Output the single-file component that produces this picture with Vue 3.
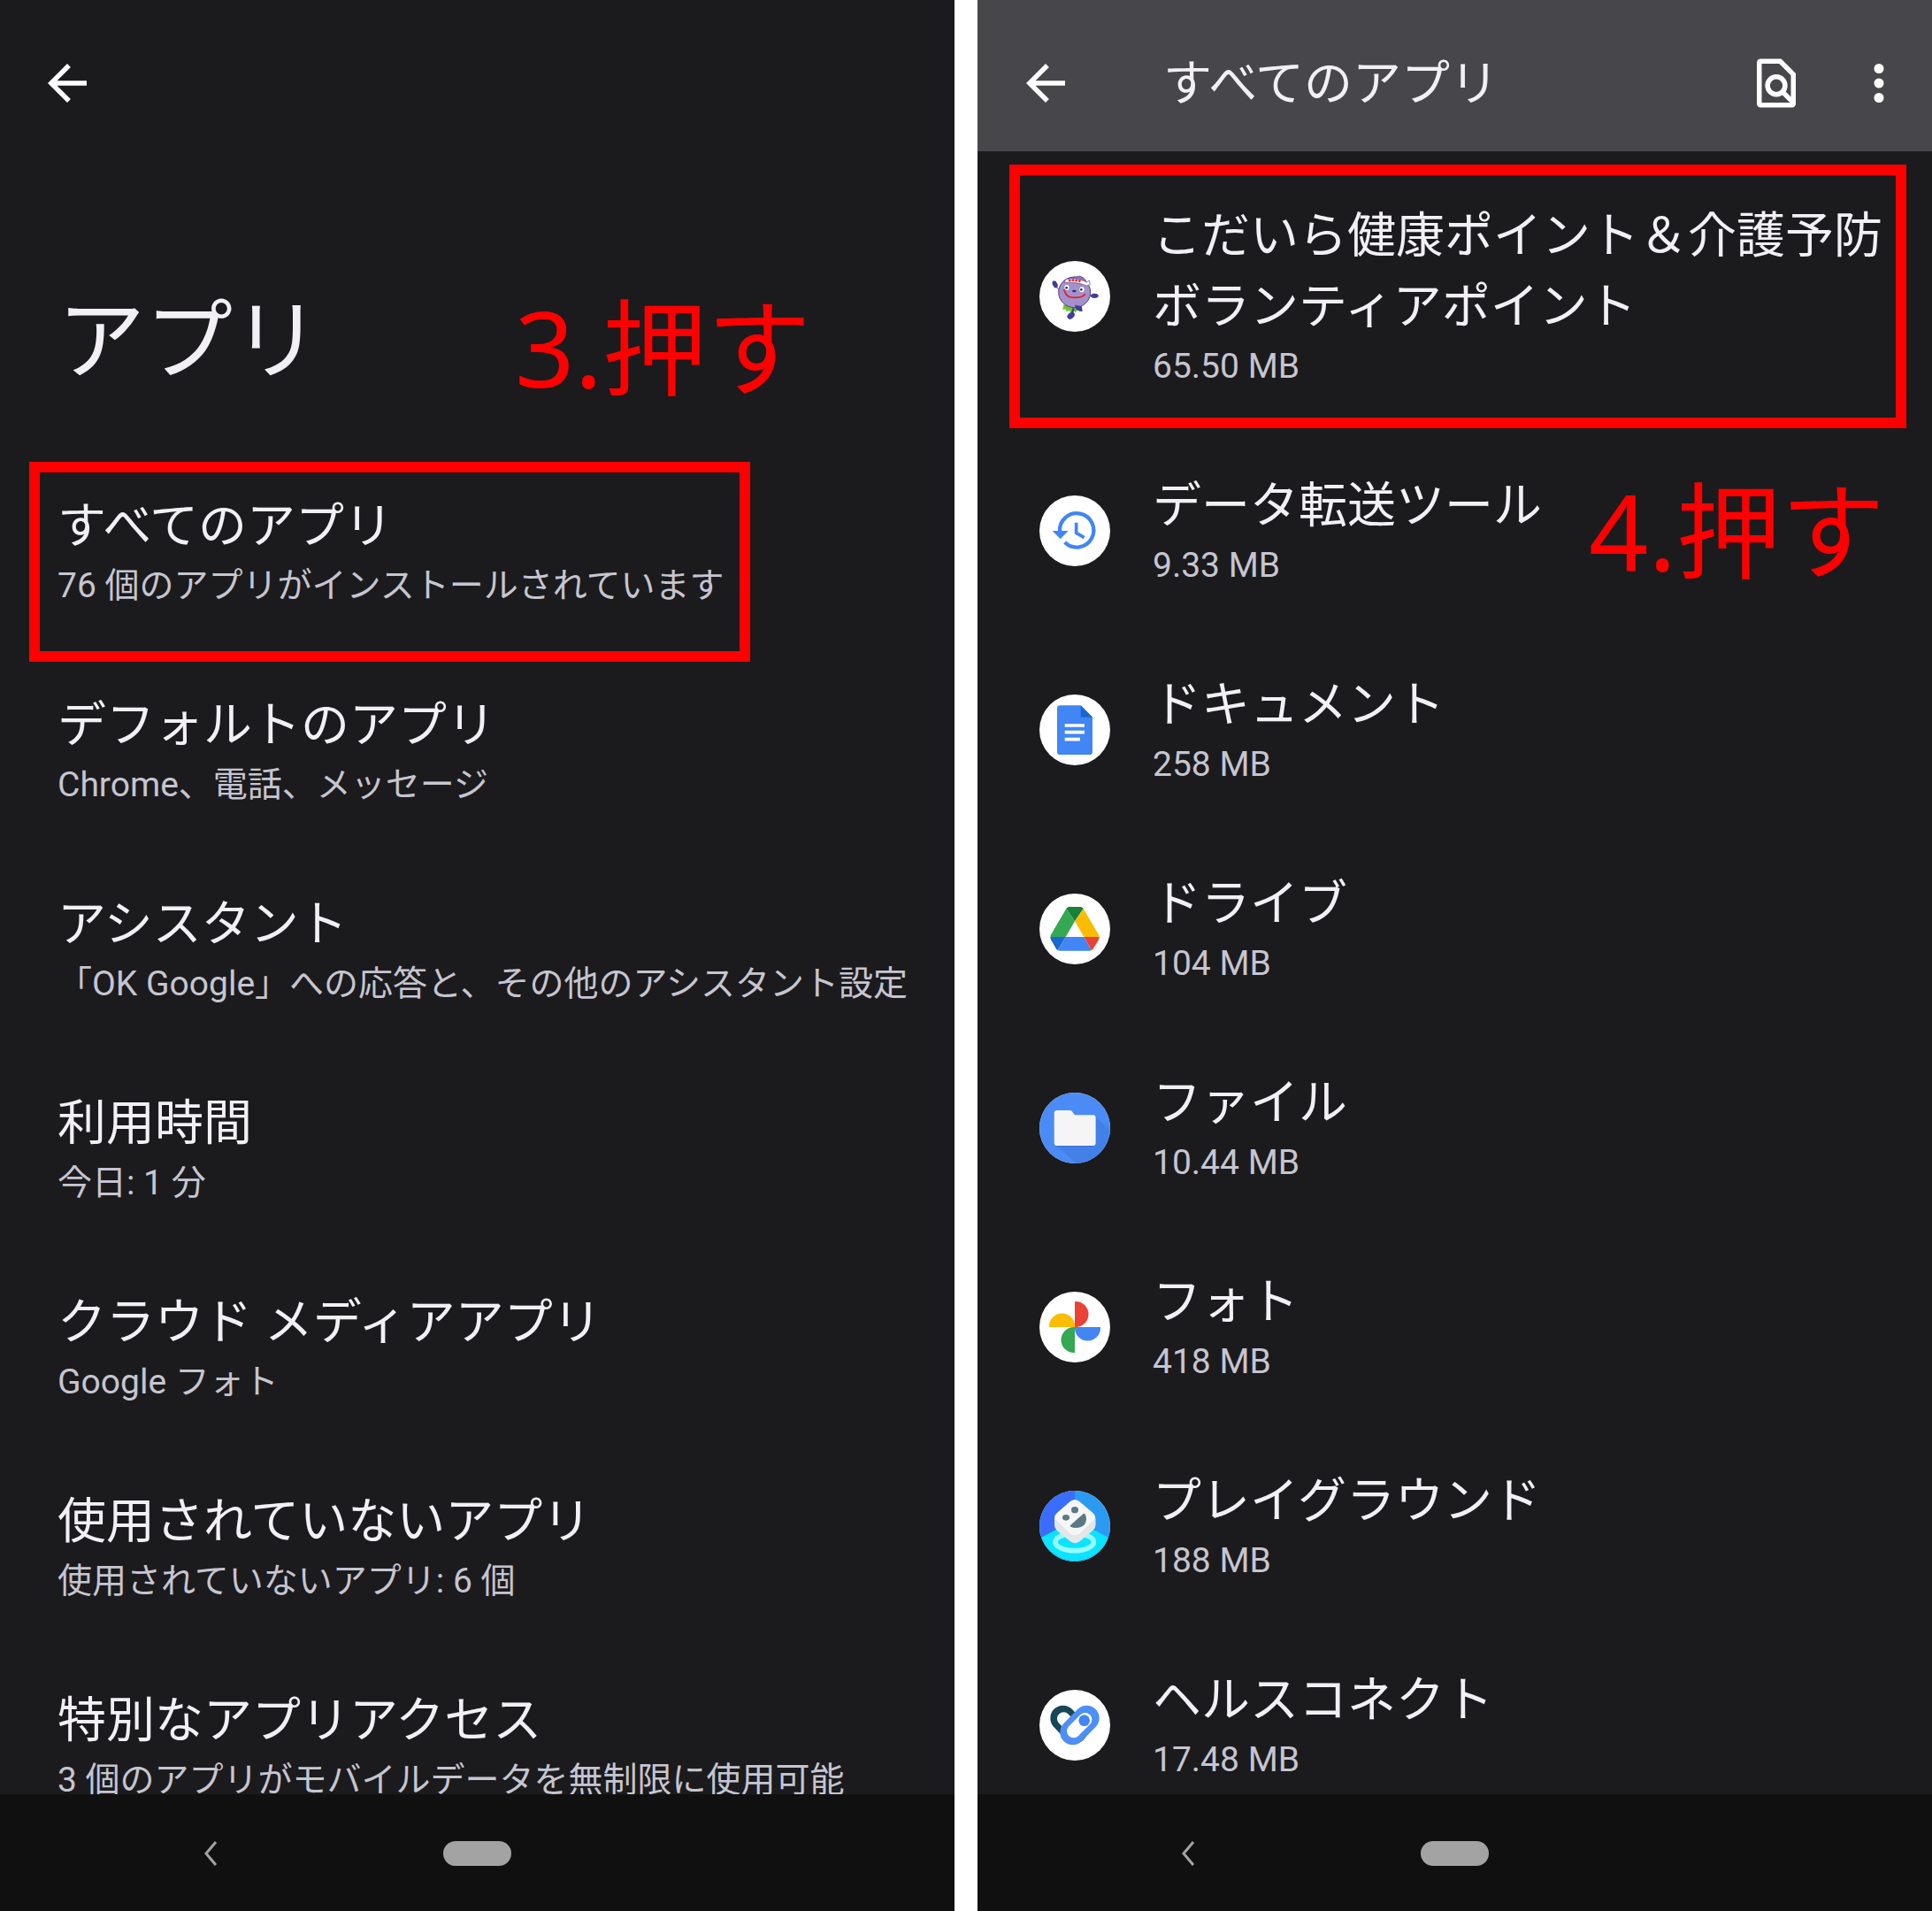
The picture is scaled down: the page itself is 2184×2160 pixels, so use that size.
<template>
  <div class="guide">
    <section class="phone">
      <header class="top-bar">
        <button class="icon-button" type="button" aria-label="戻る">
          <svg viewBox="0 0 24 24" fill="#fff">
            <path d="M20 11H7.830l5.590-5.590L12 4l-8 8 8 8 1.410-1.410L7.830 13H20v-2z" />
          </svg>
        </button>
      </header>
      <h1 class="page-title">アプリ</h1>
      <ul class="list">
        <li v-for="item in settings" :key="item.title">
          <a class="row" href="#">
            <span class="row-text">
              <span class="row-title">{{ item.title }}</span>
              <span class="row-sub">{{ item.sub }}</span>
            </span>
          </a>
        </li>
      </ul>
      <nav class="nav-bar">
        <button class="nav-back" type="button" aria-label="前の画面">
          <svg viewBox="0 0 16 28"><path d="M14 1 3 14l11 13" /></svg>
        </button>
        <button class="nav-home" type="button" aria-label="ホーム"></button>
      </nav>
      <div class="frame frame-settings"></div>
      <p class="step step-settings">3.押す</p>
    </section>

    <section class="phone">
      <header class="top-bar filled">
        <button class="icon-button" type="button" aria-label="戻る">
          <svg viewBox="0 0 24 24" fill="#fff">
            <path d="M20 11H7.830l5.590-5.590L12 4l-8 8 8 8 1.410-1.410L7.830 13H20v-2z" />
          </svg>
        </button>
        <h2 class="bar-title">すべてのアプリ</h2>
        <button class="icon-button" type="button" aria-label="検索">
          <svg viewBox="0 0 24 24" fill="none" stroke="#fff" stroke-width="2">
            <path d="M5.500 3H13.600L19 8.400V20.500a.5.5 0 0 1-.5.5h-13a.5.5 0 0 1-.5-.5v-17a.5.5 0 0 1 .5-.5z" />
            <circle cx="12" cy="13" r="3.600" />
            <path d="m14.500 15.500 4.200 4.200" />
          </svg>
        </button>
        <button class="icon-button" type="button" aria-label="メニュー">
          <svg viewBox="0 0 24 24" fill="#fff">
            <circle cx="12" cy="6" r="2" />
            <circle cx="12" cy="12" r="2" />
            <circle cx="12" cy="18" r="2" />
          </svg>
        </button>
      </header>
      <ul class="list app-list">
        <li v-for="app in apps" :key="app.name">
          <a class="row app-row" href="#">
            <svg class="app-icon" viewBox="0 0 240 240" aria-hidden="true">
              <circle cx="120" cy="120" r="120" fill="#fff" />

              <g v-if="app.icon === 'mascot'">
                <path d="m82 148-3 18 9-3 4 9 9-5 6 8 8-7 8 7 5-8 10 3 2-16z" fill="#6cc82c" />
                <path d="m116 160-5 18" stroke="#3f3f97" stroke-width="7" />
                <ellipse cx="107" cy="185" rx="14" ry="10" fill="#3f3f97" transform="rotate(-42 107 185)" />
                <path d="m58 88 10 12M170 118h12" stroke="#5b3b8c" stroke-width="3" />
                <ellipse cx="53" cy="79" rx="8" ry="13" fill="#3f3f97" transform="rotate(-25 53 79)" />
                <ellipse cx="187" cy="118" rx="13" ry="8" fill="#3f3f97" />
                <ellipse cx="119" cy="106" rx="54" ry="52" fill="#a391cb" stroke="#5b3b8c" stroke-width="3" />
                <path d="M96 59q20-2 40-8 16 4 22 16l-4 14-58-14z" fill="#8877bd" stroke="#5b3b8c" stroke-width="2" />
                <path d="M89 62q35-8 72 10l8-6 3 14-12 4q-32-14-75-11z" fill="#fff" stroke="#5b3b8c" stroke-width="2" />
                <path d="M99 66q22-3 43 4" fill="none" stroke="#e8292e" stroke-width="8" stroke-dasharray="8 3" />
                <ellipse cx="93" cy="90" rx="8" ry="9" fill="#fff" />
                <ellipse cx="144" cy="97" rx="8" ry="9" fill="#fff" />
                <circle cx="92" cy="91" r="4" fill="#27305f" />
                <circle cx="142" cy="97" r="4" fill="#27305f" />
                <ellipse cx="118" cy="102" rx="7" ry="4" fill="#30336f" />
                <path d="M86 106q8 19 35 18 25 1 35-12" fill="none" stroke="#e51f2b" stroke-width="5" />
                <path d="m79 98 8-2 5 17z" fill="#e51f2b" />
                <path d="m123 151 19 5 2 13-8-1-11-6z" fill="#3f3f97" stroke="#3f3f97" stroke-width="4" stroke-linejoin="round" />
              </g>

              <g v-else-if="app.icon === 'transfer'">
                <path d="M69 122a57.500 57.500 0 1 1 17 37" fill="none" stroke="#4285f4" stroke-width="13" />
                <path d="M44 120h54l-27 28z" fill="#4285f4" />
                <path d="M125 92v35l27 16" fill="none" stroke="#4285f4" stroke-width="11" />
              </g>

              <g v-else-if="app.icon === 'docs'">
                <path d="M70 37h70l40 40v117q0 10-10 10H70q-10 0-10-10V47q0-10 10-10z" fill="#4285f4" />
                <path d="M140 37v40h40z" fill="#1967d2" />
                <path d="M86 105h67M86 128h67M86 152h52" stroke="#fff" stroke-width="11" />
              </g>

              <g v-else-if="app.icon === 'drive'">
                <path d="M91 51q4-6 10-6h38q6 0 10 6l-29 43z" fill="#188038" />
                <path d="m91 51 29 43-31 53H37q0-5 3-9z" fill="#34a853" />
                <path d="m149 51 51 87q3 4 3 9h-52l-31-53z" fill="#fbbc04" />
                <path d="M37 147h52l-27 45q-4-2-6-6l-16-28q-3-5-3-11z" fill="#1967d2" />
                <path d="M89 147h62l26 45q-4 2-8 2H71q-5 0-9-2z" fill="#4285f4" />
                <path d="M151 147h52q0 6-3 11l-17 28q-2 4-6 6z" fill="#ea4335" />
              </g>

              <g v-else-if="app.icon === 'files'">
                <circle cx="120" cy="120" r="120" fill="#4b8bf5" />
                <path d="m189 80 50 47A120 120 0 0 1 125 240l-70-62z" fill="#4380e8" />
                <path d="M60 62h48l13 16h60q10 0 10 10v84q0 10-10 10H60q-10 0-10-10V72q0-10 10-10z" fill="#3569c4" />
                <path d="M60 60h44q4 0 6 3l10 13h61q10 0 10 10v84q0 10-10 10H60q-10 0-10-10V70q0-10 10-10z" fill="#f5f5f5" />
              </g>

              <g v-else-if="app.icon === 'photos'">
                <path d="M120 33h3a43.500 43.500 0 0 1 0 87h-3z" fill="#ea4335" />
                <path d="M207 120v3a43.500 43.500 0 0 1-87 0v-3z" fill="#4285f4" />
                <path d="M120 207h-3a43.500 43.500 0 0 1 0-87h3z" fill="#34a853" />
                <path d="M33 120v-3a43.500 43.500 0 0 1 87 0v3z" fill="#fbbc04" />
              </g>

              <g v-else-if="app.icon === 'play'">
                <circle cx="120" cy="120" r="120" fill="#2a9af3" />
                <path d="M120 0a120 120 0 0 0-113 158l113-58z" fill="#3b6dfb" />
                <path d="M7 158a120 120 0 0 0 226 0l-113-60z" fill="#0be3ff" />
                <ellipse cx="119" cy="174" rx="65" ry="29" fill="none" stroke="#96fbff" stroke-width="17" />
                <path d="M105 36q15-11 30 0l45 38q10 8 10 18v26q0 8-9 16l-45 38q-15 11-31 0l-45-38q-9-8-9-17V92q0-10 10-18z" fill="#d9dcde" />
                <path d="M105 36q15-11 30 0l45 38q17 16 0 31l-45 42q-15 10-30 0L61 105q-18-15 0-31z" fill="#f6f6f6" />
                <path d="M52 94q2 8 9 14l44 40q15 9 30 0l45-40q8-7 10-14v22q0 11-9 18l-45 38q-15 11-31 0l-45-38q-8-7-8-17z" fill="#e4e6e8" />
                <ellipse cx="120" cy="65" rx="12" ry="11" fill="#5b7886" />
                <ellipse cx="90" cy="91" rx="12" ry="10" fill="#5b7886" />
                <path d="M105 117q-2 3 1 5 14 7 32 2 20-6 21-27 0-11-5-19-3-2-6 1z" fill="#5b7886" />
              </g>

              <g v-else-if="app.icon === 'health'" fill="none" stroke-linecap="round">
                <path d="m80 96 40 42" stroke="#174657" stroke-width="86" />
                <path d="m82 98 40 42" stroke="#fff" stroke-width="44" />
                <path d="m160 96-47 48" stroke="#4d8ff6" stroke-width="86" />
                <path d="m155 101-39 39" stroke="#fff" stroke-width="46" />
                <circle cx="152" cy="104" r="19" fill="#4285f4" />
              </g>
            </svg>
            <span class="row-text">
              <span class="row-title">{{ app.name }}</span>
              <span class="row-sub">{{ app.size }}</span>
            </span>
          </a>
        </li>
      </ul>
      <nav class="nav-bar">
        <button class="nav-back" type="button" aria-label="前の画面">
          <svg viewBox="0 0 16 28"><path d="M14 1 3 14l11 13" /></svg>
        </button>
        <button class="nav-home" type="button" aria-label="ホーム"></button>
      </nav>
      <div class="frame frame-app"></div>
      <p class="step step-app">4.押す</p>
    </section>
  </div>
</template>

<script setup>
import { ref } from "vue";

const settings = ref([
  { title: "すべてのアプリ", sub: "76 個のアプリがインストールされています" },
  { title: "デフォルトのアプリ", sub: "Chrome、電話、メッセージ" },
  { title: "アシスタント", sub: "「OK Google」への応答と、その他のアシスタント設定" },
  { title: "利用時間", sub: "今日: 1 分" },
  { title: "クラウド メディアアプリ", sub: "Google フォト" },
  { title: "使用されていないアプリ", sub: "使用されていないアプリ: 6 個" },
  { title: "特別なアプリアクセス", sub: "3 個のアプリがモバイルデータを無制限に使用可能" },
]);

const apps = ref([
  { name: "こだいら健康ポイント＆介護予防ボランティアポイント", size: "65.50 MB", icon: "mascot" },
  { name: "データ転送ツール", size: "9.33 MB", icon: "transfer" },
  { name: "ドキュメント", size: "258 MB", icon: "docs" },
  { name: "ドライブ", size: "104 MB", icon: "drive" },
  { name: "ファイル", size: "10.44 MB", icon: "files" },
  { name: "フォト", size: "418 MB", icon: "photos" },
  { name: "プレイグラウンド", size: "188 MB", icon: "play" },
  { name: "ヘルスコネクト", size: "17.48 MB", icon: "health" },
]);
</script>

<style>
body {
  margin: 0;
  background: #fff;
}
</style>

<style scoped>
.guide {
  display: grid;
  grid-template-columns: 1fr 1fr;
  gap: 26px;
  height: 100vh;
  font-family: Roboto, "Noto Sans CJK JP", sans-serif;
}

.phone {
  position: relative;
  display: flex;
  flex-direction: column;
  min-width: 0;
  min-height: 0;
  background: #1b1b1d;
  color: #f2f0f4;
}

button {
  padding: 0;
  border: 0;
  background: none;
  cursor: pointer;
}

.top-bar {
  display: flex;
  flex-shrink: 0;
  align-items: center;
  box-sizing: border-box;
  height: 171px;
  padding: 17px 27px 0 43px;
}

.top-bar.filled {
  padding-left: 44px;
  background: #47464b;
}

.icon-button,
.icon-button svg {
  display: block;
  width: 66px;
  height: 66px;
}

.icon-button + .icon-button {
  margin-left: 50px;
}

.bar-title {
  flex: 1;
  margin: 0 0 0 100px;
  font-size: 55px;
  font-weight: 400;
  line-height: 80px;
}

.page-title {
  flex-shrink: 0;
  margin: 0;
  padding: 143px 65px 50px;
  font-size: 99px;
  font-weight: 400;
  line-height: 144px;
}

/* the last row runs a little way under the navigation bar */
.list {
  flex: 1;
  min-height: 0;
  margin: 0;
  padding: 0;
  list-style: none;
}

.app-list {
  padding-top: 9px;
}

.row {
  display: flex;
  align-items: center;
  gap: 48px;
  padding: 46px 0 42px 65px;
  color: inherit;
  text-decoration: none;
}

.app-row {
  padding-right: 48px;
  padding-left: 70px;
}

.app-icon {
  flex-shrink: 0;
  width: 80px;
  height: 80px;
}

.row-text {
  flex: 1;
  min-width: 0;
}

.row-title {
  display: block;
  font-size: 55px;
  line-height: 80px;
}

.row-sub {
  display: block;
  color: #c6c5d0;
  font-size: 39px;
  line-height: 57px;
  white-space: nowrap;
}

.nav-bar {
  display: grid;
  grid-template-columns: 1fr 77px 1fr;
  flex-shrink: 0;
  align-items: center;
  box-sizing: border-box;
  height: 132px;
  padding-top: 2px;
  background: #101010;
}

.nav-back {
  justify-self: center;
  width: 66px;
  height: 66px;
  margin-right: 26px;
}

.nav-back svg {
  display: block;
  width: 16px;
  height: 28px;
  margin: 0 auto;
  fill: none;
  stroke: #a3a3a3;
  stroke-width: 3;
}

.nav-home {
  height: 28px;
  border-radius: 14px;
  background: #a3a3a3;
}

/* red marks laid over the screens */
.frame {
  position: absolute;
  box-sizing: border-box;
  border: 12px solid #f00;
  pointer-events: none;
}

.frame-settings {
  top: 522px;
  left: 33px;
  width: 815px;
  height: 226px;
}

.frame-app {
  top: 186px;
  right: 29px;
  left: 36px;
  height: 298px;
}

.step {
  position: absolute;
  margin: 0;
  color: #f00;
  font-family: "Noto Sans", "Noto Sans CJK JP", sans-serif;
  font-size: 118px;
  line-height: 160px;
}

.step-settings {
  top: 313px;
  left: 582px;
}

.step-app {
  top: 520px;
  left: 691px;
}
</style>
